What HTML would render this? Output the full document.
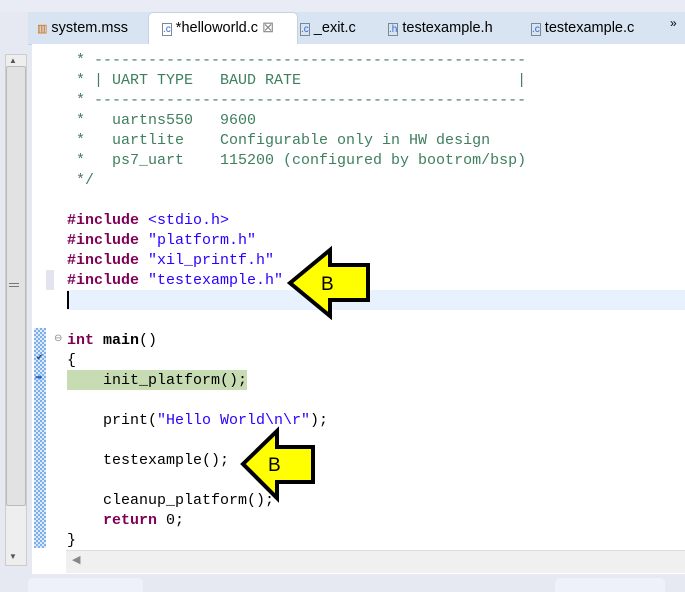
<!DOCTYPE html>
<html><head><style>
body{margin:0;width:685px;height:590px;background:#e6e9f2;position:relative;overflow:hidden;font-family:"Liberation Sans",sans-serif}
.ed{position:absolute;left:32px;top:44px;width:653px;height:530px;background:#fff}
.tabs{position:absolute;left:28px;top:12px;width:657px;height:32px;background:#d8e4f1;border-bottom:1px solid #c6d2e0}
.tab{position:absolute;top:8px;font-size:14.5px;color:#000}
.code{position:absolute;left:67px;top:51px;font-family:"Liberation Mono",monospace;font-size:15px;line-height:20px;white-space:pre;color:#000}
.c{color:#3f7f5f}.k{color:#7f0055;font-weight:bold}.s{color:#2a00ff}
</style></head><body>
<div style="position:absolute;left:0;top:0;width:685px;height:12px;background:#e9ecf5"></div>
<div style="position:absolute;left:5px;top:54px;width:20px;height:510px;background:#eee;border:1px solid #ccc"></div>
<div style="position:absolute;left:6px;top:66px;width:18px;height:438px;background:#e2e2e2;border:1px solid #bbb;border-radius:2px"></div>
<div style="position:absolute;left:9px;top:283px;width:10px;height:1px;border-top:1px solid #777;border-bottom:1px solid #777;height:2px"></div>
<div class="tabs"></div>
<div style="position:absolute;left:148px;top:12px;width:148px;height:33px;background:#fff;border:1px solid #c6d2e0;border-bottom:none;border-radius:5px 5px 0 0"></div>
<div class="tab" style="left:37px;top:20px"><span style="color:#c60;font-size:11px">▥</span> system.mss</div>
<div class="tab" style="left:162px;top:20px"><span style="font-size:10px;border:1px solid #789;color:#36c">.c</span> *helloworld.c <span style="color:#888">⊠</span></div>
<div class="tab" style="left:300px;top:20px"><span style="font-size:10px;border:1px solid #789;color:#36c">.c</span> _exit.c</div>
<div class="tab" style="left:388px;top:20px"><span style="font-size:10px;border:1px solid #789;color:#36c">.h</span> testexample.h</div>
<div class="tab" style="left:531px;top:20px"><span style="font-size:10px;border:1px solid #789;color:#36c">.c</span> testexample.c</div>
<div class="tab" style="left:670px;top:16px;font-size:12px">»</div>
<div class="ed"></div>
<div style="position:absolute;left:46px;top:270px;width:8px;height:20px;background:#e4e4f0"></div>
<div style="position:absolute;left:34px;top:328px;width:12px;height:220px;background:repeating-conic-gradient(#7fb0ea 0 25%,#dce9fa 0 50%) 0 0/4px 4px"></div>
<div style="position:absolute;left:67px;top:290px;width:618px;height:20px;background:#e8f2fe"></div>
<div style="position:absolute;left:67px;top:370px;width:180px;height:20px;background:#c7dcb2"></div>
<div style="position:absolute;left:67px;top:291px;width:2px;height:18px;background:#000"></div>
<div style="position:absolute;left:54px;top:333px;font-size:10px;color:#888">⊖</div>
<div style="position:absolute;left:36px;top:352px;font-size:9px;color:#247">✔</div>
<div style="position:absolute;left:35px;top:372px;font-size:9px;color:#26c">➡</div>
<div class="code"><span class="c"> * ------------------------------------------------
 * | UART TYPE   BAUD RATE                        |
 * ------------------------------------------------
 *   uartns550   9600
 *   uartlite    Configurable only in HW design
 *   ps7_uart    115200 (configured by bootrom/bsp)
 */</span>

<span class="k">#include</span> <span class="s">&lt;stdio.h&gt;</span>
<span class="k">#include</span> <span class="s">"platform.h"</span>
<span class="k">#include</span> <span class="s">"xil_printf.h"</span>
<span class="k">#include</span> <span class="s">"testexample.h"</span>


<span class="k">int</span> <b>main</b>()
{
    init_platform();

    print(<span class="s">"Hello World\n\r"</span>);

    testexample();

    cleanup_platform();
    <span class="k">return</span> 0;
}</div>
<div style="position:absolute;left:66px;top:550px;width:619px;height:22px;background:#f0f0f0;border-top:1px solid #ddd"></div>
<div style="position:absolute;left:72px;top:553px;font-size:11px;color:#888">◀</div>
<div style="position:absolute;left:9px;top:56px;font-size:8px;color:#555">▲</div>
<div style="position:absolute;left:9px;top:552px;font-size:8px;color:#555">▼</div>
<div style="position:absolute;left:28px;top:578px;width:115px;height:14px;background:#eef1f8;border-radius:5px 5px 0 0"></div>
<div style="position:absolute;left:555px;top:578px;width:110px;height:14px;background:#eef1f8;border-radius:5px 5px 0 0"></div>
<svg style="position:absolute;left:0;top:0" width="685" height="590">
<polygon points="290,283 330,250 330,265 368,265 368,300 330,300 330,316" fill="#ffff00" stroke="#000" stroke-width="4" stroke-linejoin="miter"/>
<text x="321" y="290" font-family="Liberation Sans" font-size="19" fill="#000">B</text>
<polygon points="243,464 277,431 277,447 313,447 313,482 277,482 277,498" fill="#ffff00" stroke="#000" stroke-width="4"/>
<text x="268" y="471" font-family="Liberation Sans" font-size="19" fill="#000">B</text>
</svg>
</body></html>
